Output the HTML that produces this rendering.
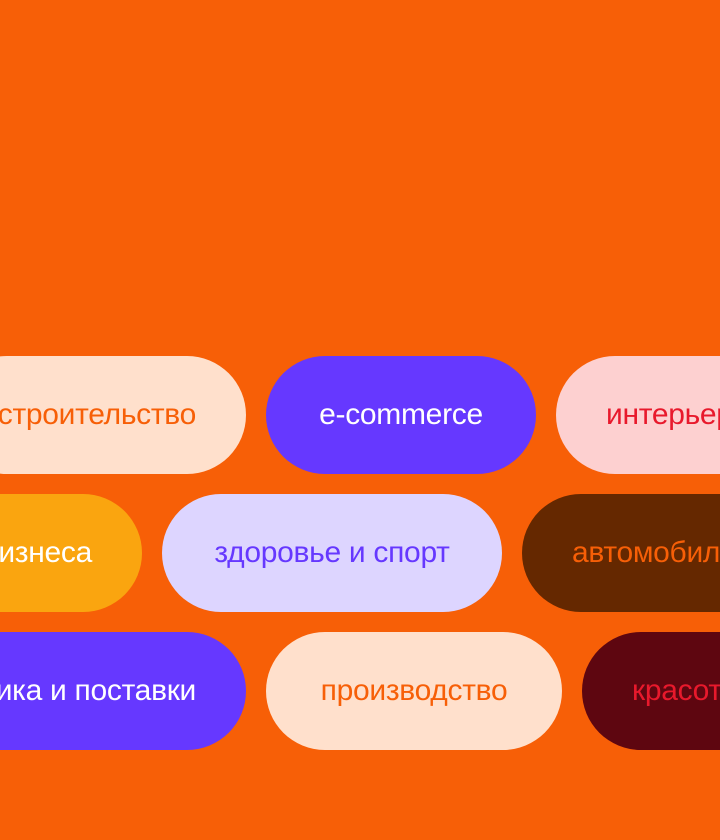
<!DOCTYPE html>
<html><head><meta charset="utf-8"><style>
html,body{margin:0;padding:0;overflow:hidden}
body{width:720px;height:840px;background:#F75F07;position:relative;font-family:"Liberation Sans","DejaVu Sans",sans-serif}
.w{position:absolute;left:0;top:0;width:720px;height:840px;overflow:hidden}
.p{position:absolute;height:118px;border-radius:59px;padding:0 50px;display:flex;align-items:center;white-space:nowrap;font-size:30px;box-sizing:border-box;letter-spacing:-0.3px}
</style></head><body><div class="w">
<div class="p" style="top:356px;right:474px;background:#FFE0CC;color:#F75F07">строительство</div>
<div class="p" style="top:356px;left:266px;width:270px;justify-content:center;padding:0;background:#6638FF;color:#fff">e-commerce</div>
<div class="p" style="top:356px;left:556px;background:#FDD0D0;color:#E8192C">интерьер</div>

<div class="p" style="top:494px;right:578px;background:#FAA50F;color:#fff">для бизнеса</div>
<div class="p" style="top:494px;left:162px;width:340px;justify-content:center;padding:0;background:#DDD5FF;color:#6638FF">здоровье и спорт</div>
<div class="p" style="top:494px;left:522px;background:#652800;color:#F75F07">автомобили</div>

<div class="p" style="top:632px;right:474px;background:#6638FF;color:#fff">логистика и поставки</div>
<div class="p" style="top:632px;left:266px;width:296px;justify-content:center;padding:0;background:#FFE0CC;color:#F75F07">производство</div>
<div class="p" style="top:632px;left:582px;background:#5E0610;color:#E8192C">красота</div>
</div></body></html>
